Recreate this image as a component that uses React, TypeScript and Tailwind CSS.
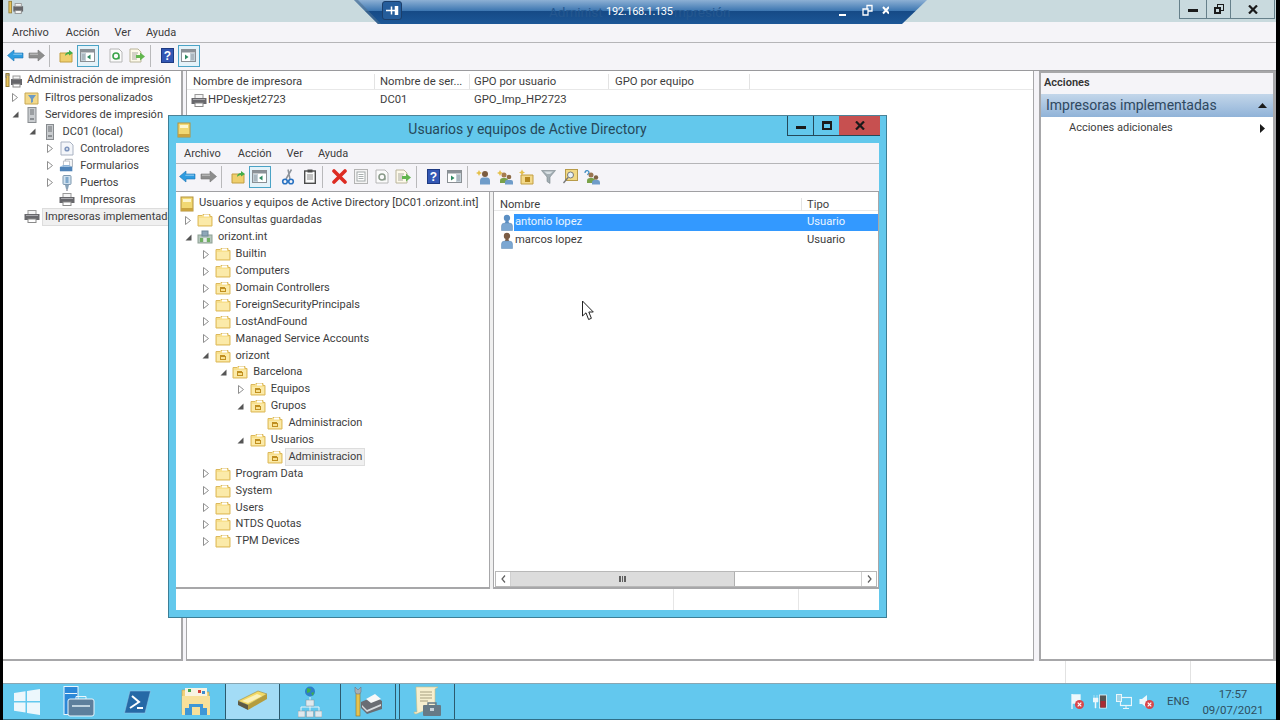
import React from "react";

const Folder = ({ ou = false }: { ou?: boolean }) => (
  <svg width="16" height="14" viewBox="0 0 16 14">
    <path d="M1 2.5 H5 L6 1.5 H13 V3.5 H15 V13 H1 Z" fill="#f8e08e" stroke="#dcb95c" strokeWidth="1" />
    <path d="M2 5 H14 V12 H2 Z" fill="#fbeaa9" />
    <path d="M7 1.5 h5 v2 h-5z" fill="#fff" />
    {ou && <path d="M5 6 H10 V7 H11 V11 H5 Z" fill="#c08f20" />}
    {ou && <path d="M6 8 H10 V10 H6 Z" fill="#f8e08e" />}
  </svg>
);

const AdBook = () => (
  <svg width="14" height="16" viewBox="0 0 14 16" className="shrink-0">
    <rect x="1" y="1" width="12" height="14" fill="#f1d873" stroke="#b3913a" />
    <rect x="3" y="3" width="8" height="3" fill="#fdf6cf" />
    <rect x="1" y="12" width="12" height="3" fill="#c9a33f" />
  </svg>
);

const Domain = () => (
  <svg width="16" height="14" viewBox="0 0 16 14">
    <rect x="1" y="5" width="14" height="8" fill="#b7c8bf" stroke="#8da093" />
    <rect x="5" y="1" width="6" height="5" fill="#8fa7b8" stroke="#6f8797" />
    <rect x="3" y="8" width="3" height="4" fill="#6fae62" />
    <rect x="10" y="8" width="3" height="4" fill="#6fae62" />
    <rect x="6.5" y="8" width="3" height="4" fill="#e8eee9" />
  </svg>
);

const Printer = () => (
  <svg width="16" height="13" viewBox="0 0 16 13" className="shrink-0">
    <rect x="4" y="0.5" width="8" height="4" fill="#f4f4f4" stroke="#9a9a9a" />
    <rect x="0.5" y="4" width="15" height="6" fill="#68686c" />
    <rect x="2" y="5" width="12" height="1" fill="#a9a9ad" />
    <rect x="4" y="9" width="8" height="3.5" fill="#fff" stroke="#8a8a8a" />
  </svg>
);

const PrintRoot = () => (
  <svg width="18" height="16" viewBox="0 0 18 16" className="shrink-0">
    <rect x="1" y="0.5" width="3" height="13" fill="#e8c35a" stroke="#97803c" />
    <path d="M0 2 H5 M0 3.5 L2 5" stroke="#888" />
    <rect x="6" y="6" width="11" height="6" fill="#66666a" />
    <rect x="8" y="3" width="7" height="3" fill="#f5f5f5" stroke="#999" />
    <rect x="8" y="11" width="7" height="3" fill="#fff" stroke="#888" />
  </svg>
);

const FilterFolder = () => (
  <svg width="16" height="14" viewBox="0 0 16 14">
    <path d="M1 2 H14 V13 H1 Z" fill="#f3d98a" stroke="#c8a955" />
    <path d="M4 4 H12 L9 8 V11 L7 12 V8 Z" fill="#6c9ac4" />
  </svg>
);

const Server = ({ small = false }: { small?: boolean }) => (
  <svg width="16" height="16" viewBox="0 0 16 16">
    <rect x={small ? 4.5 : 4} y="0.5" width={small ? 7 : 8} height="15" fill="#c9cccf" stroke="#888c90" />
    <path d="M6 3 H10 M6 5 H10 M6 7 H10" stroke="#6c7074" />
    <rect x="6" y="11" width="4" height="2" fill="#8a8e92" />
  </svg>
);

const DriverIcon = () => (
  <svg width="14" height="15" viewBox="0 0 14 15">
    <path d="M1 1 H10 L13 4 V14 H1 Z" fill="#f4f6fa" stroke="#a9b2c2" />
    <circle cx="7" cy="8" r="2.6" fill="#7e95bd" />
    <circle cx="7" cy="8" r="1" fill="#e8edf5" />
  </svg>
);

const FormsIcon = () => (
  <svg width="18" height="15" viewBox="0 0 18 15">
    <path d="M7 0.5 H15 V9 H7 Z" fill="#fff" stroke="#9da3ab" />
    <path d="M5 2.5 H12 V10 H5 Z" fill="#fff" stroke="#b4b9c0" />
    <path d="M1 9 H15 V14 H1 Z" fill="#4f83b8" />
    <path d="M1 9 L5 7 H11 L15 9 Z" fill="#8db4da" />
  </svg>
);

const PortIcon = () => (
  <svg width="10" height="16" viewBox="0 0 10 16">
    <rect x="1" y="0.5" width="8" height="9" rx="1" fill="#cfe0ee" stroke="#7d98af" />
    <rect x="3.5" y="2" width="3" height="6" fill="#7fa8cb" />
    <path d="M3 10 H7 L6 14 H4 Z" fill="#88a2b8" />
    <path d="M5 14 V16" stroke="#667" />
  </svg>
);

const User = ({ head }: { head: string }) => (
  <svg width="12" height="17" viewBox="0 0 12 17" className="shrink-0">
    <circle cx="6" cy="4" r="3.2" fill={head} />
    <path d="M4.5 7 H7.5 L8 9 H4 Z" fill={head} />
    <path d="M0.5 16.5 V12 Q0.5 9 4 9 H8 Q11.5 9 11.5 12 V16.5 Z" fill="#7ba7d2" stroke="#5f88b2" strokeWidth="0.5" />
  </svg>
);

const Arrow = ({ dir, color }: { dir: "l" | "r"; color: string }) => (
  <svg width="17" height="13" viewBox="0 0 17 13">
    <path
      d={dir === "l" ? "M0.5 6.5 L7 1 V4 H16 V9 H7 V12 Z" : "M16.5 6.5 L10 1 V4 H1 V9 H10 V12 Z"}
      fill={color}
      stroke={color === "#2f9ce0" ? "#1c74b4" : "#777"}
      strokeWidth="0.6"
    />
    <path d={dir === "l" ? "M7 4.5 H15 V6 H6 Z" : "M2 4.5 H10 V6 H2 Z"} fill="#fff" opacity="0.35" />
  </svg>
);

const UpFolder = () => (
  <svg width="15" height="14" viewBox="0 0 15 14">
    <path d="M1 4 H13 V13 H1 Z" fill="#efcf6d" stroke="#c29e42" />
    <path d="M6 7 C6 4 8 3 10 3 V1 L14 4 L10 6.5 V5 C8 5 7 6 6 7 Z" fill="#43ad4a" />
  </svg>
);

const Pane = ({ side }: { side: "l" | "r" }) => (
  <svg width="15" height="13" viewBox="0 0 15 13">
    <rect x="0.5" y="0.5" width="14" height="12" fill="#fff" stroke="#8a8f94" />
    <rect x="1" y="1" width="13" height="2.5" fill="#8b9298" />
    {side === "l" ? <rect x="1" y="4" width="5" height="8" fill="#c3d0d8" /> : <rect x="9" y="4" width="5" height="8" fill="#c3d0d8" />}
    <path d={side === "l" ? "M10.5 5.5 L7 8 L10.5 10.5 Z" : "M4 5.5 L7.5 8 L4 10.5 Z"} fill="#2f8a62" />
    <path d={side === "l" ? "M2 6 H5 M2 8 H5 M2 10 H5" : "M10 6 H13 M10 8 H13 M10 10 H13"} stroke="#7f8a92" strokeWidth="0.7" />
  </svg>
);

const Refresh = ({ faded = false }: { faded?: boolean }) => (
  <svg width="14" height="15" viewBox="0 0 14 15">
    <path d="M1 1 H10 L13 4 V14 H1 Z" fill="#fbfbfb" stroke="#b6b6b6" />
    <circle cx="7" cy="8" r="3" fill="none" stroke={faded ? "#8a9a8a" : "#3aa34a"} strokeWidth="1.6" />
    <path d="M8.5 9 L11 9.5 L10 12 Z" fill={faded ? "#8a9a8a" : "#3aa34a"} />
  </svg>
);

const ExportIcon = () => (
  <svg width="17" height="15" viewBox="0 0 17 15">
    <path d="M1 1 H9 L12 4 V14 H1 Z" fill="#fdf9ea" stroke="#b9b49a" />
    <path d="M3 5 H9 M3 7 H8 M3 9 H8 M3 11 H8" stroke="#a9a9a0" />
    <path d="M7 7 H11 V4.5 L16 8.5 L11 12.5 V10 H7 Z" fill="#62b64f" />
  </svg>
);

const Help = () => (
  <svg width="13" height="15" viewBox="0 0 13 15">
    <rect x="0.5" y="0.5" width="12" height="14" fill="#3357b4" stroke="#1e3a82" />
    <text x="6.5" y="12" textAnchor="middle" fontSize="12" fontWeight="700" fill="#fff" fontFamily="Liberation Sans">?</text>
  </svg>
);

const Cut = () => (
  <svg width="14" height="16" viewBox="0 0 14 16">
    <path d="M10.5 0.5 L5 10 M7 0.5 L9 10" stroke="#8d939a" strokeWidth="1.5" />
    <circle cx="4" cy="12.5" r="2.3" fill="none" stroke="#2a73c2" strokeWidth="1.6" />
    <circle cx="10" cy="12.5" r="2.3" fill="none" stroke="#2a73c2" strokeWidth="1.6" />
  </svg>
);

const Paste = () => (
  <svg width="12" height="15" viewBox="0 0 12 15">
    <rect x="0.7" y="2" width="10.6" height="12.3" fill="#fafafa" stroke="#4c4c4c" strokeWidth="1.4" />
    <rect x="3.5" y="0.5" width="5" height="3" fill="#4c4c4c" />
    <path d="M3 6 H9 M3 8 H9 M3 10 H9" stroke="#888" />
  </svg>
);

const Del = () => (
  <svg width="15" height="15" viewBox="0 0 15 15">
    <path d="M2 2 L13 13 M13 2 L2 13" stroke="#dd2c22" strokeWidth="3.6" strokeLinecap="round" />
  </svg>
);

const Props = () => (
  <svg width="14" height="15" viewBox="0 0 14 15">
    <rect x="0.5" y="0.5" width="13" height="14" fill="#f4f4f4" stroke="#b4b4b4" />
    <rect x="3" y="3" width="8" height="9" fill="#fff" stroke="#a2a8a8" />
    <path d="M4.5 5.5 H9.5 M4.5 7.5 H9.5 M4.5 9.5 H9.5" stroke="#a9b0b0" />
  </svg>
);

const AddUser = () => (
  <svg width="16" height="16" viewBox="0 0 16 16">
    <path d="M3 1 L4 3 L6 4 L4 5 L3 7 L2 5 L0 4 L2 3 Z" fill="#e5c04b" />
    <circle cx="9" cy="5" r="3" fill="#7b5c40" />
    <path d="M4 15.5 V12 Q4 8.5 7 8.5 H11 Q14 8.5 14 12 V15.5 Z" fill="#6f9cc9" />
  </svg>
);

const AddGroup = () => (
  <svg width="17" height="16" viewBox="0 0 17 16">
    <path d="M3 1 L4 3 L6 4 L4 5 L3 7 L2 5 L0 4 L2 3 Z" fill="#e5c04b" />
    <circle cx="7" cy="6" r="2.5" fill="#a67c4f" />
    <path d="M3 14 V11.5 Q3 9 6 9 H8 Q11 9 11 11.5 V14 Z" fill="#7aa24a" />
    <circle cx="12" cy="8" r="2.3" fill="#8d6a45" />
    <path d="M8 15.5 V13 Q8 11 10 11 H14 Q16 11 16 13 V15.5 Z" fill="#6f9cc9" />
  </svg>
);

const AddOu = () => (
  <svg width="16" height="16" viewBox="0 0 16 16">
    <path d="M3 0.5 L4 2.5 L6 3.5 L4 4.5 L3 6.5 L2 4.5 L0 3.5 L2 2.5 Z" fill="#e5c04b" />
    <path d="M2 6 H14 V15 H2 Z" fill="#f3d98a" stroke="#c29e42" />
    <rect x="6" y="8" width="5" height="5" fill="#b5871e" />
  </svg>
);

const Funnel = () => (
  <svg width="15" height="14" viewBox="0 0 15 14">
    <path d="M0.5 0.5 H14.5 L9 7 V13.5 L6 11.5 V7 Z" fill="#a2adb3" stroke="#7b868c" strokeWidth="0.6" />
    <path d="M3 1.5 H12 L9 4 H6 Z" fill="#d9e0e4" />
  </svg>
);

const FindBox = () => (
  <svg width="15" height="15" viewBox="0 0 15 15">
    <rect x="2.5" y="0.5" width="12" height="11" fill="#f2d985" stroke="#b89b49" />
    <circle cx="7.5" cy="6" r="3" fill="#e8f3fa" stroke="#777" />
    <path d="M5 8.5 L0.5 14" stroke="#777" strokeWidth="1.3" />
  </svg>
);

const MoveGroup = () => (
  <svg width="17" height="16" viewBox="0 0 17 16">
    <path d="M2 4 C2 1 6 1 6 3.5 L4.5 6" fill="none" stroke="#3c8cc4" strokeWidth="1.2" />
    <circle cx="8" cy="6" r="2.5" fill="#9a7550" />
    <path d="M4 14 V11.5 Q4 9 7 9 H9 Q12 9 12 11.5 V14 Z" fill="#7aa24a" />
    <circle cx="13" cy="8.5" r="2.2" fill="#7e6244" />
    <path d="M9 15.5 V13.5 Q9 11 11 11 H15 Q17 11 17 13.5 V15.5 Z" fill="#6f9cc9" />
  </svg>
);

const Tool = ({ children, on = false }: { children: React.ReactNode; on?: boolean }) => (
  <div className={`flex h-[22px] w-[21.5px] shrink-0 items-center justify-center ${on ? "border border-[#4aa3c6] bg-[#e4f2f9]" : ""}`}>
    {children}
  </div>
);

const Sep = () => <div className="ml-px mr-[6px] h-[22px] w-px shrink-0 bg-[#b9b9bb]" />;
const Gap = () => <div className="w-[7px] shrink-0" />;

const Menu = ({ className }: { className: string }) => (
  <div className={`flex h-[21px] items-center border-b border-[#b5b5b8] bg-[#f5f4f8] pt-[2px] text-[11px] text-[#3b3b3b] ${className}`}>
    <span>Archivo</span>
    <span className="ml-[17px]">Acción</span>
    <span className="ml-[15px]">Ver</span>
    <span className="ml-[15px]">Ayuda</span>
  </div>
);

type Node = { depth: number; exp?: "open" | "closed"; icon: React.ReactNode; label: string; sel?: boolean };

const TreeRow = ({ n, h }: { n: Node; h: string }) => (
  <div className={`flex items-center whitespace-nowrap text-[11px] ${h}`} style={{ paddingLeft: 8 + (n.depth - 1) * 17.6 }}>
    <div className="flex h-[9px] w-[8px] shrink-0 items-center justify-center">
      {n.exp === "closed" && (
        <svg width="6" height="9" viewBox="0 0 6 9">
          <path d="M0.5 0.5 L5.5 4.5 L0.5 8.5 Z" fill="#fff" stroke="#8f8f8f" />
        </svg>
      )}
      {n.exp === "open" && (
        <svg width="7" height="7" viewBox="0 0 7 7">
          <path d="M6.5 0.5 V6.5 H0.5 Z" fill="#555" />
        </svg>
      )}
    </div>
    <div className="ml-[5px] flex h-[16px] w-[16px] shrink-0 items-center justify-center">{n.icon}</div>
    <span className={`ml-[3px] px-[2px] leading-[16px] ${n.sel ? "bg-[#f0f0f0] outline outline-1 outline-[#dddddd]" : ""}`}>{n.label}</span>
  </div>
);

const f = <Folder />;
const o = <Folder ou />;

const adTree: Node[] = [
  { depth: 1, exp: "closed", icon: f, label: "Consultas guardadas" },
  { depth: 1, exp: "open", icon: <Domain />, label: "orizont.int" },
  { depth: 2, exp: "closed", icon: f, label: "Builtin" },
  { depth: 2, exp: "closed", icon: f, label: "Computers" },
  { depth: 2, exp: "closed", icon: o, label: "Domain Controllers" },
  { depth: 2, exp: "closed", icon: f, label: "ForeignSecurityPrincipals" },
  { depth: 2, exp: "closed", icon: f, label: "LostAndFound" },
  { depth: 2, exp: "closed", icon: f, label: "Managed Service Accounts" },
  { depth: 2, exp: "open", icon: o, label: "orizont" },
  { depth: 3, exp: "open", icon: o, label: "Barcelona" },
  { depth: 4, exp: "closed", icon: o, label: "Equipos" },
  { depth: 4, exp: "open", icon: o, label: "Grupos" },
  { depth: 5, icon: o, label: "Administracion" },
  { depth: 4, exp: "open", icon: o, label: "Usuarios" },
  { depth: 5, icon: o, label: "Administracion", sel: true },
  { depth: 2, exp: "closed", icon: f, label: "Program Data" },
  { depth: 2, exp: "closed", icon: f, label: "System" },
  { depth: 2, exp: "closed", icon: f, label: "Users" },
  { depth: 2, exp: "closed", icon: f, label: "NTDS Quotas" },
  { depth: 2, exp: "closed", icon: f, label: "TPM Devices" },
];

const printTree: Node[] = [
  { depth: 1, exp: "closed", icon: <FilterFolder />, label: "Filtros personalizados" },
  { depth: 1, exp: "open", icon: <Server />, label: "Servidores de impresión" },
  { depth: 2, exp: "open", icon: <Server small />, label: "DC01 (local)" },
  { depth: 3, exp: "closed", icon: <DriverIcon />, label: "Controladores" },
  { depth: 3, exp: "closed", icon: <FormsIcon />, label: "Formularios" },
  { depth: 3, exp: "closed", icon: <PortIcon />, label: "Puertos" },
  { depth: 3, icon: <Printer />, label: "Impresoras" },
  { depth: 1, icon: <Printer />, label: "Impresoras implementadas", sel: true },
];

const RdpBar = () => (
  <div className="absolute left-[354px] top-0 h-[25px] w-[573px]">
    <svg className="absolute inset-0" width="573" height="25" viewBox="0 0 573 25">
      <defs>
        <linearGradient id="rdp" x1="0" y1="0" x2="0" y2="1">
          <stop offset="0" stopColor="#8db0d4" />
          <stop offset="0.44" stopColor="#3f78b2" />
          <stop offset="0.46" stopColor="#164a86" />
          <stop offset="1" stopColor="#1c5797" />
        </linearGradient>
      </defs>
      <path d="M0 0 H573 L548 24 H24 Z" fill="url(#rdp)" />
      <path d="M0 0 L24 24 H27 L4 0 Z" fill="#4d6f90" opacity="0.6" />
    </svg>
    <div className="absolute left-[28px] top-[1px] flex h-[19px] w-[20px] items-center justify-center rounded-[3px] border border-[#1c3f6b] bg-[#255d9b]">
      <svg width="13" height="9" viewBox="0 0 13 9">
        <path d="M0 4.5 H6 M6 4.5 H9" stroke="#fff" strokeWidth="1.6" />
        <path d="M5.5 0.5 V8.5 M9.5 0.5 H11.5 V8.5 H9.5 Z" stroke="#fff" strokeWidth="1.5" fill="#fff" />
      </svg>
    </div>
    <span className="absolute left-[195px] top-[3px] whitespace-nowrap text-[13.5px] leading-[18px] text-[#24578f]">Administ</span>
    <span className="absolute left-[320px] top-[3px] whitespace-nowrap text-[13.5px] leading-[18px] text-[#24578f]">mpresión</span>
    <span className="absolute left-[252px] top-[3px] whitespace-nowrap text-[11px] leading-[18px] tracking-[-0.3px] text-white">192.168.1.135</span>
    <svg className="absolute left-[485px] top-[4px]" width="50" height="14" viewBox="0 0 50 14">
      <path d="M0 11 H7" stroke="#fff" strokeWidth="2" />
      <path d="M24 5 H28 V1.5 H33 V7 H29 M24 5 V11 H29 V5 Z" fill="none" stroke="#fff" strokeWidth="1.3" />
      <path d="M44 3 L50 9.5 M50 3 L44 9.5" stroke="#fff" strokeWidth="2" />
    </svg>
  </div>
);

const Dialog = () => (
  <div className="absolute left-[168px] top-[115px] flex h-[503px] w-[719px] flex-col border border-[#3c7f97] border-t-[#4d8297] bg-[#63c8ec] px-[7px] pb-[7px]">
    <div className="relative flex h-[27px] shrink-0 items-center justify-center">
      <div className="absolute left-[1px] top-[6px]">
        <AdBook />
      </div>
      <span className="text-[14px] text-[#27485a]">Usuarios y equipos de Active Directory</span>
      <div className="absolute right-[-1px] top-0 flex h-[20px] items-stretch border-b border-l border-[#24495a]">
        <div className="flex w-[26px] items-center justify-center border-r border-[#24495a]">
          <div className="mt-[3px] h-[3px] w-[10px] bg-[#1b1b1b]" />
        </div>
        <div className="flex w-[25px] items-center justify-center">
          <div className="h-[9px] w-[10px] border-2 border-t-[3px] border-[#1b1b1b]" />
        </div>
        <div className="flex w-[41px] items-center justify-center bg-[#c75050]">
          <svg width="10" height="9" viewBox="0 0 10 9">
            <path d="M1 0.5 L9 8.5 M9 0.5 L1 8.5" stroke="#1a1a1a" strokeWidth="2.2" />
          </svg>
        </div>
      </div>
    </div>
    <Menu className="pl-[8px]" />
    <div className="flex h-[28px] shrink-0 items-center border-b border-[#a0a0a3] bg-[#f5f4f8] pb-[2px] pl-[0.5px]">
      <Tool><Arrow dir="l" color="#2f9ce0" /></Tool>
      <Tool><Arrow dir="r" color="#8d8d8d" /></Tool>
      <Sep />
      <Tool><UpFolder /></Tool>
      <Tool on><Pane side="l" /></Tool>
      <Gap />
      <Tool><Cut /></Tool>
      <Tool><Paste /></Tool>
      <Sep />
      <Tool><Del /></Tool>
      <Tool><Props /></Tool>
      <Tool><Refresh faded /></Tool>
      <Tool><ExportIcon /></Tool>
      <Sep />
      <Tool><Help /></Tool>
      <Tool><Pane side="r" /></Tool>
      <Sep />
      <Tool><AddUser /></Tool>
      <Tool><AddGroup /></Tool>
      <Tool><AddOu /></Tool>
      <Tool><Funnel /></Tool>
      <Tool><FindBox /></Tool>
      <Tool><MoveGroup /></Tool>
    </div>
    <div className="flex min-h-0 flex-1 gap-[3px] bg-[#f0f0f0]">
      <div className="w-[314px] border-b-2 border-r border-[#a7a7a9] bg-white pt-[3px] text-[#3d3d3d]">
        <div className="flex h-[17px] items-center whitespace-nowrap pl-[4px] text-[11.2px]">
          <AdBook />
          <span className="ml-[5px]">Usuarios y equipos de Active Directory [DC01.orizont.int]</span>
        </div>
        {adTree.map((n, i) => (
          <TreeRow key={i} n={n} h="h-[16.9px]" />
        ))}
      </div>
      <div className="flex flex-1 flex-col border-b-2 border-l border-r border-[#a7a7a9] bg-white text-[11.2px] text-[#3d3d3d]">
        <div className="flex h-[19px] shrink-0 items-center border-b border-[#e8e8e8] pt-[6px]">
          <span className="w-[308px] border-r border-[#e3e3e3] pl-[6px] leading-[13px]">Nombre</span>
          <span className="pl-[5px] leading-[13px]">Tipo</span>
        </div>
        <div className="mt-[2px] flex h-[18px] items-center pl-[7px]">
          <User head="#5b8fc4" />
          <div className="ml-[1px] flex h-[17px] flex-1 items-center bg-[#3399ff] text-[#eaf5ff]">
            <span className="w-[293px] pl-[1px]">antonio lopez</span>
            <span>Usuario</span>
          </div>
        </div>
        <div className="flex h-[18px] items-center pl-[7px]">
          <User head="#7b5c44" />
          <div className="ml-[1px] flex flex-1 items-center">
            <span className="w-[293px] pl-[1px]">marcos lopez</span>
            <span>Usuario</span>
          </div>
        </div>
        <div className="flex-1" />
        <div className="mx-[1px] flex h-[16px] shrink-0 items-stretch border border-[#b8b8b8] bg-white">
          <div className="flex w-[15px] items-center justify-center border-r border-[#d0d0d0]">
            <svg width="5" height="8" viewBox="0 0 5 8"><path d="M4 0.5 L1 4 L4 7.5" fill="none" stroke="#606060" strokeWidth="1.2" /></svg>
          </div>
          <div className="flex w-[224px] items-center justify-center border-r border-[#b0b0b0] bg-[#dcdcdc]">
            <div className="h-[6px] w-[7px] border-x-2 border-[#606060] bg-[linear-gradient(90deg,transparent_35%,#606060_35%,#606060_65%,transparent_65%)]" />
          </div>
          <div className="flex-1" />
          <div className="flex w-[15px] items-center justify-center border-l border-[#d0d0d0]">
            <svg width="5" height="8" viewBox="0 0 5 8"><path d="M1 0.5 L4 4 L1 7.5" fill="none" stroke="#606060" strokeWidth="1.2" /></svg>
          </div>
        </div>
      </div>
    </div>
    <div className="flex h-[21px] shrink-0 bg-white">
      <div className="w-[498px] border-r border-[#e6e6e6]" />
      <div className="w-[125px] border-r border-[#e6e6e6]" />
    </div>
  </div>
);

const Cursor = () => (
  <svg className="absolute left-[581px] top-[300px]" width="14" height="21" viewBox="0 0 14 21">
    <path d="M1.5 1 V16 L5 12.8 L7.6 19.5 L10.4 18.3 L7.8 12 H12.3 Z" fill="#fff" stroke="#222" strokeWidth="1" />
  </svg>
);

const WinLogo = () => (
  <svg width="26" height="26" viewBox="0 0 26 26">
    <path d="M0 4 L11.5 2.2 V12 H0 Z M13 2 L26 0 V12 H13 Z M0 13.5 H11.5 V23.5 L0 21.8 Z M13 13.5 H26 V26 L13 24 Z" fill="#ecf7fc" />
  </svg>
);

const ServerMgr = () => (
  <svg width="32" height="31" viewBox="0 0 32 31">
    <rect x="1" y="0.5" width="14" height="28" fill="#2b88d8" stroke="#e9f6fc" />
    <rect x="2" y="7" width="12" height="1" fill="#e9f6fc" />
    <rect x="5" y="13" width="26" height="17" rx="2" fill="#5d7f9c" stroke="#e9f6fc" />
    <path d="M13 13 V10.5 H23 V13" fill="none" stroke="#e9f6fc" />
    <path d="M9 20 H27" stroke="#e9f6fc" strokeWidth="1.4" />
  </svg>
);

const Powershell = () => (
  <svg width="27" height="24" viewBox="0 0 27 24">
    <path d="M6 1 H26.5 L21 23 H0.5 Z" fill="#2669a6" stroke="#9ccbe8" strokeWidth="0.5" />
    <path d="M8 6 L15 12 L6 18" fill="none" stroke="#fff" strokeWidth="2" />
    <path d="M13 18 H19" stroke="#fff" strokeWidth="2" />
  </svg>
);

const Explorer = () => (
  <svg width="30" height="29" viewBox="0 0 30 29">
    <path d="M1 3 H10 L12 5 H28 V27 H1 Z" fill="#f2d27a" stroke="#bd9b4e" strokeWidth="0.6" />
    <rect x="4" y="1" width="22" height="8" fill="#f8f3e2" />
    <rect x="7" y="2" width="3" height="3" fill="#49a64a" />
    <rect x="17" y="3" width="3" height="3" fill="#d7423a" />
    <rect x="21" y="4" width="3" height="3" fill="#3f8bd0" />
    <path d="M1 9 H29 V28 H1 Z" fill="#f8e09a" />
    <path d="M8 17 H22 V21 H26 V28 H4 V21 H8 Z" fill="#3f97d6" />
    <path d="M11 20 H19 V28 H11 Z" fill="#f8e09a" />
  </svg>
);

const BookTask = () => (
  <svg width="31" height="24" viewBox="0 0 31 24">
    <path d="M1 11 L21 1 L30 4 L11 15 Z" fill="#f3da67" stroke="#9b8a3f" strokeWidth="0.6" />
    <path d="M1 11 L11 15 V20 L1 15 Z" fill="#5e5a44" />
    <path d="M11 15 L30 4 V9 L11 20 Z" fill="#b59d3d" />
    <path d="M5 11 L20 4 L25 6 L11 13 Z" fill="#fbf2bc" />
  </svg>
);

const SitesIcon = () => (
  <svg width="24" height="32" viewBox="0 0 24 32">
    <circle cx="12" cy="5.5" r="5" fill="#2e7fc7" />
    <path d="M9 2 L13 3 L12 6 L9 7 Z M13 7 L16 6 L15 10 Z" fill="#3db14a" />
    <path d="M12 11 V17 M3 25 V21 H21 V25 M12 17 V25" stroke="#ecf4f7" strokeWidth="1" fill="none" />
    <rect x="8" y="14" width="8" height="6" fill="#dfe9ee" stroke="#84949d" strokeWidth="0.5" />
    <rect x="0" y="25" width="7" height="6" fill="#dfe9ee" stroke="#84949d" strokeWidth="0.5" />
    <rect x="8.5" y="25" width="7" height="6" fill="#dfe9ee" stroke="#84949d" strokeWidth="0.5" />
    <rect x="17" y="25" width="7" height="6" fill="#dfe9ee" stroke="#84949d" strokeWidth="0.5" />
  </svg>
);

const PrintMgr = () => (
  <svg width="30" height="31" viewBox="0 0 30 31">
    <rect x="3" y="7" width="4" height="23" fill="#e5c34f" stroke="#8a742d" strokeWidth="0.6" />
    <path d="M2 1 L5 4 L8 1 V6 L6.5 8 H3.5 L2 6 Z" fill="#a8b0b5" stroke="#667" strokeWidth="0.5" />
    <path d="M8 16 L22 10 L29 15 V23 L14 28 L8 22 Z" fill="#6a6d73" />
    <path d="M13 13 L22 8 L28 13 L18 17 Z" fill="#f7f8f8" />
    <path d="M9 19 L14 24 L28 18 V20 L14 26 L9 21 Z" fill="#d7dbde" />
  </svg>
);

const EventLog = () => (
  <svg width="28" height="31" viewBox="0 0 28 31">
    <path d="M3 1 H25 L22 3 V20 L3 28 Q1 28 1 26 H4 Z" fill="#f6efcf" stroke="#cdbd7f" strokeWidth="0.6" />
    <path d="M7 6 H19 M7 9 H19 M7 12 H19 M7 15 H15" stroke="#a69f80" />
    <rect x="10" y="19" width="18" height="11" rx="1" fill="#667a86" />
    <path d="M15 19 V17 H23 V19" fill="none" stroke="#667a86" strokeWidth="1.4" />
    <rect x="17" y="22" width="4" height="3" fill="#c8d3d9" />
  </svg>
);

const Badge = () => (
  <svg className="absolute bottom-0 right-0" width="9" height="9" viewBox="0 0 9 9">
    <circle cx="4.5" cy="4.5" r="4.5" fill="#d9464b" />
    <path d="M2.7 2.7 L6.3 6.3 M6.3 2.7 L2.7 6.3" stroke="#fff" strokeWidth="1.2" />
  </svg>
);

const Tray = () => (
  <div className="ml-auto flex h-full items-center pr-[13px] text-[#2f4f60]">
    <div className="relative h-[15px] w-[13px]">
      <svg width="10" height="15" viewBox="0 0 10 15"><path d="M1 0 V15 M1 1 H9 V9 H1" fill="#eef8fc" stroke="#eef8fc" strokeWidth="1.3" /></svg>
      <Badge />
    </div>
    <div className="relative ml-[9px] h-[15px] w-[14px]">
      <svg width="14" height="15" viewBox="0 0 14 15"><path d="M1 1 V4 M4 1 V4 M0 4 H5 V8 H3 V14 H2 V8 H0 Z" fill="#eef8fc" stroke="#eef8fc" strokeWidth="0.5" /><rect x="6.5" y="1" width="7" height="13" fill="#555" stroke="#eef8fc" strokeWidth="0.8" /><rect x="7.5" y="7" width="5" height="6.5" fill="#a92c35" /></svg>
    </div>
    <div className="ml-[9px] h-[15px] w-[15px]">
      <svg width="16" height="15" viewBox="0 0 16 15"><rect x="4.5" y="3.5" width="11" height="8" fill="none" stroke="#e8f6fb" strokeWidth="1.2" /><path d="M10 12 V14 M7 14.5 H13" stroke="#e8f6fb" /><rect x="0.5" y="0.5" width="5" height="7" fill="#9fd3e6" stroke="#e8f6fb" /></svg>
    </div>
    <div className="relative ml-[8px] h-[15px] w-[15px]">
      <svg width="11" height="15" viewBox="0 0 11 15"><path d="M0.5 5 H3 L8 1 V14 L3 10 H0.5 Z" fill="#eef8fc" /></svg>
      <Badge />
    </div>
    <span className="ml-[13px] w-[22px] text-[11.5px]">ENG</span>
    <div className="ml-[14px] flex w-[60px] flex-col items-center text-[11.5px] leading-[16px]">
      <span>17:57</span>
      <span className="whitespace-nowrap">09/07/2021</span>
    </div>
  </div>
);

const TaskItem = ({ children, className }: { children: React.ReactNode; className: string }) => (
  <div className={`flex h-full shrink-0 items-center justify-center ${className}`}>{children}</div>
);

export default function App() {
  return (
    <div className="relative h-[720px] w-[1280px] overflow-hidden bg-black pl-[3px] pr-[4px] font-['Roboto',sans-serif]">
      <div className="flex h-full flex-col bg-[#f5f4f8]">
        <div className="flex h-[22px] shrink-0 items-center justify-between bg-[#c9dade] pl-[5px]">
          <svg width="16" height="16" viewBox="0 0 18 16" className="mt-[-6px]">
            <rect x="1" y="0.5" width="3" height="13" fill="#e8c35a" stroke="#97803c" />
            <rect x="6" y="6" width="11" height="6" fill="#66666a" />
            <rect x="8" y="3" width="7" height="3" fill="#f5f5f5" stroke="#999" />
            <rect x="8" y="11" width="7" height="3" fill="#fff" stroke="#888" />
          </svg>
          <div className="mb-[3px] mr-[1px] flex h-[19px] self-start border-b border-l border-r border-[#66808a]">
            <div className="flex w-[27px] items-center justify-center border-r border-[#66808a]">
              <div className="mt-[3px] h-[3px] w-[10px] bg-[#1b1b1b]" />
            </div>
            <div className="flex w-[24px] items-center justify-center border-r border-[#66808a]">
              <div className="relative h-[10px] w-[10px]">
                <div className="absolute right-0 top-0 h-[7px] w-[7px] border border-[#1b1b1b]" />
                <div className="absolute bottom-0 left-0 h-[7px] w-[7px] border-2 border-[#1b1b1b] bg-[#c9dade]" />
              </div>
            </div>
            <div className="flex w-[43px] items-center justify-center">
              <svg width="10" height="9" viewBox="0 0 10 9">
                <path d="M1 0.5 L9 8.5 M9 0.5 L1 8.5" stroke="#1a1a1a" strokeWidth="2.2" />
              </svg>
            </div>
          </div>
        </div>
        <Menu className="pl-[9px]" />
        <div className="flex h-[28px] shrink-0 items-center border-b border-[#9a9a9d] pb-[2px] pl-[1.5px]">
          <Tool><Arrow dir="l" color="#2f9ce0" /></Tool>
          <Tool><Arrow dir="r" color="#8d8d8d" /></Tool>
          <Sep />
          <Tool><UpFolder /></Tool>
          <Tool on><Pane side="l" /></Tool>
          <Gap />
          <Tool><Refresh /></Tool>
          <Tool><ExportIcon /></Tool>
          <Sep />
          <Tool><Help /></Tool>
          <Tool on><Pane side="r" /></Tool>
        </div>
        <div className="flex min-h-0 flex-1 gap-[3px] text-[11.3px] text-[#3d3d3d]">
          <div className="w-[180px] shrink-0 border-b-2 border-r-2 border-[#a7a7a9] bg-white pt-[1px]">
            <div className="flex h-[17px] items-center whitespace-nowrap pl-[2px]">
              <PrintRoot />
              <span className="ml-[4px]">Administración de impresión</span>
            </div>
            {printTree.map((n, i) => (
              <TreeRow key={i} n={n} h="h-[17px]" />
            ))}
          </div>
          <div className="flex w-[848px] shrink-0 flex-col border-b-2 border-r border-l border-[#a7a7a9] bg-white">
            <div className="flex h-[19px] shrink-0 items-center border-b border-[#e8e8e8] pt-[3px]">
              <span className="w-[188px] border-r border-[#e3e3e3] pl-[6px] leading-[15px]">Nombre de impresora</span>
              <span className="w-[95px] border-r border-[#e3e3e3] pl-[5px] leading-[15px]">Nombre de ser...</span>
              <span className="w-[139px] border-r border-[#e3e3e3] pl-[4px] leading-[15px]">GPO por usuario</span>
              <span className="w-[141px] border-r border-[#e3e3e3] pl-[6px] leading-[15px]">GPO por equipo</span>
            </div>
            <div className="flex h-[19px] items-center pt-[1px]">
              <div className="flex w-[188px] items-center pl-[4px]">
                <Printer />
                <span className="ml-[1px]">HPDeskjet2723</span>
              </div>
              <span className="w-[95px] pl-[5px]">DC01</span>
              <span className="pl-[4px]">GPO_Imp_HP2723</span>
            </div>
          </div>
          <div className="ml-[2px] flex min-w-0 flex-1 flex-col border-b-2 border-l-2 border-r-[3px] border-t-2 border-[#a7a7a9] bg-white">
            <div className="flex h-[21px] shrink-0 items-center bg-[#f5f4f8] pl-[3px] text-[11px] font-semibold text-[#333333]">Acciones</div>
            <div className="flex h-[23px] shrink-0 items-center justify-between bg-[linear-gradient(#c3d6ea,#90b3d8)] pl-[5px] pr-[6px] text-[14px] text-[#2f4860]">
              <span>Impresoras implementadas</span>
              <svg width="9" height="5" viewBox="0 0 9 5"><path d="M0 5 L4.5 0 L9 5 Z" fill="#1b1b1b" /></svg>
            </div>
            <div className="flex h-[22px] items-center justify-between pl-[28px] pr-[8px] text-[11px] text-[#3d3d3d]">
              <span>Acciones adicionales</span>
              <svg width="5" height="9" viewBox="0 0 5 9"><path d="M0 0 L5 4.5 L0 9 Z" fill="#1b1b1b" /></svg>
            </div>
          </div>
        </div>
        <div className="flex h-[22px] shrink-0 bg-white">
          <div className="w-[1063px] border-r border-[#e2e2e2]" />
          <div className="w-[125px] border-r border-[#e2e2e2]" />
        </div>
        <div className="flex h-[37px] shrink-0 items-stretch border-b border-t border-b-[#2f6f88] border-t-[#8aa6b2] bg-[#63c8ee]">
          <TaskItem className="w-[47px]"><WinLogo /></TaskItem>
          <TaskItem className="w-[58px]"><ServerMgr /></TaskItem>
          <TaskItem className="w-[58px]"><Powershell /></TaskItem>
          <TaskItem className="w-[59px]"><Explorer /></TaskItem>
          <TaskItem className="w-[55px] border-x border-[#2c5a6e] bg-[#a3dcf6]"><BookTask /></TaskItem>
          <TaskItem className="w-[61px] border-r border-[#2c5a6e]"><SitesIcon /></TaskItem>
          <TaskItem className="w-[55px] border-r border-[#2c5a6e]"><PrintMgr /></TaskItem>
          <div className="w-[3px] shrink-0" />
          <TaskItem className="w-[56px] border-x border-[#2c5a6e]"><EventLog /></TaskItem>
          <Tray />
        </div>
      </div>
      <RdpBar />
      <Dialog />
      <Cursor />
    </div>
  );
}
